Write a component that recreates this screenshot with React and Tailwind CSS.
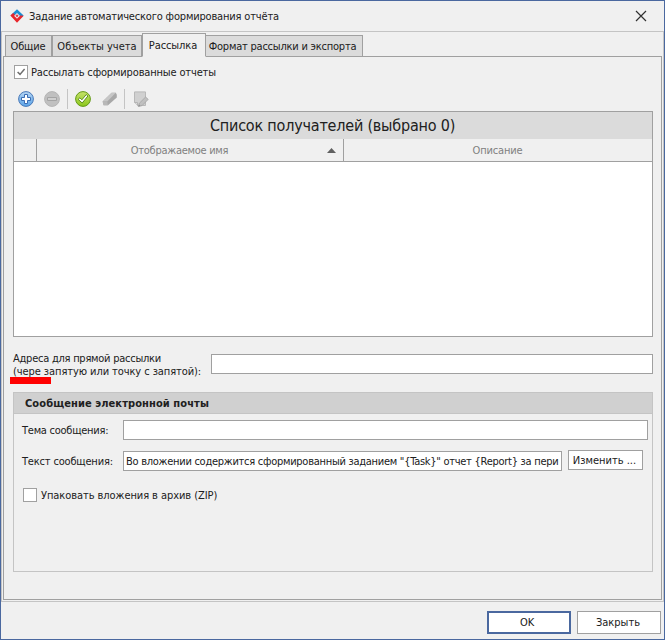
import React, { useState } from 'react'
import clsx from 'clsx'

// ── Data ─────────────────────────────────────────────────────────────────────

const TABS = [
  { id: 'general', label: 'Общие',                     width: 'w-[47px] pr-px',  tracking: 'tracking-[-0.15px]' },
  { id: 'objects', label: 'Объекты учета',             width: 'w-[90px]',        tracking: 'tracking-[0px]' },
  { id: 'mailing', label: 'Рассылка',                  width: 'w-[64px] pr-[2px]', tracking: 'tracking-[-0.1px]' },
  { id: 'format',  label: 'Формат рассылки и экспорта', width: 'w-[157px] pr-[3px]', tracking: 'tracking-[-0.22px]' },
]

const MESSAGE = 'Во вложении содержится сформированный заданием "{Task}" отчет {Report} за пери'

// ── Icons ────────────────────────────────────────────────────────────────────

function LogoIcon() {
  return (
    <svg width="14" height="14" viewBox="0 0 14 14">
      <path d="M7 0.2L13.6 6.4L10.8 8.6L7 4.8L3.4 8.2L1.4 5.6Z" fill="#1c8fd2" />
      <path d="M0.3 6.6L3.2 4L5.2 6L4.4 7L7 9.4L10.2 6.4L13.7 6.8L7 13.8Z" fill="#e8262c" />
      <path d="M7 4L9.8 6.8L7 9.6L4.2 6.8Z" fill="#f4eef0" />
      <path d="M7 5.2L8.6 6.8L7 8.4L5.4 6.8Z" fill="#e0404a" />
    </svg>
  )
}

function AddIcon() {
  return (
    <svg width="16" height="16" viewBox="0 0 16 16">
      <defs>
        <linearGradient id="add" x1="0" y1="0" x2="0" y2="1">
          <stop offset="0" stopColor="#b5d5f3" />
          <stop offset="1" stopColor="#5aa4e8" />
        </linearGradient>
      </defs>
      <circle cx="8" cy="8" r="7.4" fill="url(#add)" stroke="#4a79b8" />
      <path d="M6.5 3.5H9.5V6.5H12.5V9.5H9.5V12.5H6.5V9.5H3.5V6.5H6.5Z" fill="#fff" stroke="#3a6db5" />
    </svg>
  )
}

function RemoveIcon() {
  return (
    <svg width="16" height="16" viewBox="0 0 16 16">
      <circle cx="8" cy="8" r="7.4" fill="#c0c0c0" stroke="#b4b4b4" />
      <path d="M3.5 6.5H12.5V9.5H3.5Z" fill="#cfcfcf" stroke="#a4a4a4" />
    </svg>
  )
}

function CheckIcon() {
  return (
    <svg width="16" height="16" viewBox="0 0 16 16">
      <defs>
        <linearGradient id="check" x1="0" y1="0" x2="0" y2="1">
          <stop offset="0" stopColor="#c6e26a" />
          <stop offset="1" stopColor="#8cc81c" />
        </linearGradient>
      </defs>
      <circle cx="8" cy="8" r="7.4" fill="url(#check)" stroke="#649a18" />
      <path d="M3.2 8.4L4.9 6.8L6.9 8.8L11.2 3.6L12.9 5L7.2 12Z" fill="#fff" stroke="#4f8510" strokeWidth="0.9" />
    </svg>
  )
}

function EraserIcon() {
  return (
    <svg width="16" height="16" viewBox="0 0 16 16">
      <path d="M0.6 10.4L9.6 1.8H13.8L14.8 3.8V6.4L6 14.2H1.6Z" fill="#a8a8a8" />
      <path d="M0.6 10.4L9.6 1.8H13.8L5.2 10.4Z" fill="#c6c6c6" />
      <path d="M0.6 10.4H5.2L6 14.2H1.6Z" fill="#b8b8b8" />
    </svg>
  )
}

function EditIcon() {
  return (
    <svg width="16" height="16" viewBox="0 0 16 16">
      <path d="M0.5 0.9H11.5V14.5H3.5L0.5 11.5Z" fill="#d0d0d0" stroke="#b8b8b8" />
      <path d="M0.5 11.5H3.5V14.5" fill="#dcdcdc" stroke="#b4b4b4" />
      <path d="M4.4 15.5L5.4 12.2L11.6 6L14.2 8.4L8 14.6Z" fill="#c0c0c0" stroke="#a2a2a2" strokeWidth="0.8" />
      <path d="M4.4 15.5L5 13.4L6.6 14.9Z" fill="#909090" />
    </svg>
  )
}

// ── Controls ─────────────────────────────────────────────────────────────────

function CheckBox({ checked, onChange, label, tracking, className }) {
  return (
    <label className={clsx('flex items-center h-[14px]', className)}>
      <input type="checkbox" className="sr-only" checked={checked} onChange={onChange} />
      <span className="w-[14px] h-[14px] shrink-0 bg-white border border-[#a0a0a0]">
        {checked && (
          <svg width="12" height="12" viewBox="0 0 12 12">
            <path d="M2.6 6L5 8.4L9.6 3" fill="none" stroke="#6e6e6e" strokeWidth="1.5" />
          </svg>
        )}
      </span>
      <span className={clsx('whitespace-nowrap', tracking)}>{label}</span>
    </label>
  )
}

function TextBox({ value = '', className }) {
  return (
    <div className={clsx('h-5 bg-white border border-[#a0a0a0] pl-[2px] flex items-center', className)}>
      <span className="whitespace-nowrap tracking-[-0.27px]">{value}</span>
    </div>
  )
}

function Tabs({ active, onSelect }) {
  return (
    <div className="flex items-end h-[25px] pl-[2px] -mb-px">
      {TABS.map(({ id, label, width, tracking }) => (
        <button
          key={id}
          onClick={() => onSelect(id)}
          className={clsx(
            'shrink-0 border border-[#a0a0a0] whitespace-nowrap text-center',
            width,
            tracking,
            active === id ? 'h-[24px] bg-[#f0f0f0] border-b-[#f0f0f0]' : 'h-[22px] bg-[#dbdbdb]',
            id === 'format' && 'border-l-0'
          )}
        >
          {label}
        </button>
      ))}
    </div>
  )
}

function Toolbar() {
  return (
    <div className="flex items-center h-5 mt-[10px] pl-[14px]">
      <AddIcon />
      <div className="w-[10px]" />
      <RemoveIcon />
      <div className="w-px h-5 bg-[#c4c4c4] ml-[7px] mr-[7px]" />
      <CheckIcon />
      <div className="w-[11px]" />
      <EraserIcon />
      <div className="w-px h-5 bg-[#c4c4c4] ml-[6px] mr-[9px]" />
      <EditIcon />
    </div>
  )
}

function Recipients() {
  return (
    <div className="flex flex-col ml-[9px] mt-[2px] w-[640px] h-[226px] border border-[#a0a0a0] bg-white">
      <div className="h-[27px] bg-[#dbdbdb] flex items-center justify-center pr-px text-[16px] leading-none tracking-[-0.2px]">
        Список получателей (выбрано 0)
      </div>
      <div className="flex h-[23px] bg-[#f0f0f0] border-b border-[#a0a0a0] text-[#808080]">
        <div className="w-[23px] border-r border-[#a0a0a0]" />
        <div className="w-[307px] border-r border-[#a0a0a0] flex items-center">
          <span className="flex-1 text-center pr-[5px] tracking-[-0.27px]">Отображаемое имя</span>
          <svg width="9" height="5" viewBox="0 0 9 5" className="mr-[7px]">
            <path d="M0 5L4.5 0L9 5Z" fill="#606060" />
          </svg>
        </div>
        <div className="flex-1 flex items-center justify-center pr-px tracking-[-0.15px]">Описание</div>
      </div>
    </div>
  )
}

function MessageGroup({ pack, onPack }) {
  return (
    <div className="ml-[9px] mt-[14px] w-[640px] h-[180px] border border-[#c4c4c4]">
      <div className="h-[21px] bg-[#d0d0d0] border-b border-[#c4c4c4] flex items-center pl-[11px] font-bold tracking-[0.09px]">
        Сообщение электронной почты
      </div>
      <div className="flex items-center mt-[6px] pl-2">
        <span className="w-[101px] whitespace-nowrap tracking-[-0.25px]">Тема сообщения:</span>
        <TextBox className="w-[525px]" />
      </div>
      <div className="flex items-center mt-[10px] pl-2 h-[21px]">
        <span className="w-[101px] whitespace-nowrap tracking-[-0.18px] pt-px">Текст сообщения:</span>
        <TextBox value={MESSAGE} className="w-[439px] mt-px" />
        <button className="ml-[6px] -mt-px w-[75px] h-5 pr-[2px] bg-white border border-[#a0a0a0] whitespace-nowrap">
          Изменить ...
        </button>
      </div>
      <CheckBox
        className="mt-[17px] ml-[9px] gap-1"
        tracking="tracking-[-0.07px]"
        label="Упаковать вложения в архив (ZIP)"
        checked={pack}
        onChange={onPack}
      />
    </div>
  )
}

// ── App ──────────────────────────────────────────────────────────────────────

export default function App() {
  const [tab, setTab] = useState('mailing')
  const [send, setSend] = useState(true)
  const [pack, setPack] = useState(false)

  return (
    <div className="w-[665px] h-[640px] flex flex-col bg-[#f0f0f0] border border-[#4a689f] overflow-hidden text-[#202020] text-[11px] leading-[13px] font-['DejaVu_Sans_Condensed','DejaVu_Sans',sans-serif]">
      {/* Title bar */}
      <header className="h-[30px] shrink-0 flex items-center pl-[9px] pr-[17px]">
        <LogoIcon />
        <span className="ml-[5px] flex-1 tracking-[-0.17px]">Задание автоматического формирования отчёта</span>
        <svg width="12" height="12" viewBox="0 0 12 12">
          <path d="M1 1L11 11M11 1L1 11" stroke="#303030" strokeWidth="1.2" />
        </svg>
      </header>

      <main className="h-[571px] shrink-0 border border-[#c4c4c4] px-px">
        <Tabs active={tab} onSelect={setTab} />
        <section className="h-[544px] border border-[#a0a0a0]">
          <CheckBox
            className="mt-2 ml-[10px] gap-[3px]"
            tracking="tracking-[-0.15px]"
            label="Рассылать сформированные отчеты"
            checked={send}
            onChange={() => setSend(!send)}
          />
          <Toolbar />
          <Recipients />

          {/* Direct addresses */}
          <div className="flex items-start mt-[14px] ml-[9px]">
            <div className="relative w-[198px] h-[27px] pt-px whitespace-nowrap">
              <p className="tracking-[-0.25px]">Адреса для прямой рассылки</p>
              <p className="tracking-[-0.08px]">(чере запятую или точку с запятой):</p>
              <div className="absolute -left-[3px] top-[26px] w-[41px] h-[7px] bg-[#ff0000]" />
            </div>
            <TextBox className="w-[442px] mt-[3px]" />
          </div>

          <MessageGroup pack={pack} onPack={() => setPack(!pack)} />
        </section>
      </main>

      {/* Buttons */}
      <footer className="flex justify-end gap-[6px] pt-[9px] pr-[3px]">
        <button className="w-[84px] h-[23px] pr-1 bg-white border-2 border-[#4a689f] tracking-[-0.1px]">OK</button>
        <button className="w-[84px] h-[23px] pr-[2px] bg-white border border-[#a0a0a0]">Закрыть</button>
      </footer>
    </div>
  )
}
